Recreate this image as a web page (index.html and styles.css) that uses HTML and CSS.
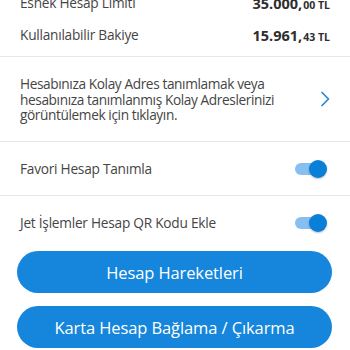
FILE: index.html
```html
<!DOCTYPE html>
<html lang="tr">
<head>
<meta charset="utf-8">
<link rel="stylesheet" href="styles.css">
</head>
<body>
<div class="page">
  <section class="amounts">
    <div class="amount-row">
      <span class="label">Esnek Hesap Limiti</span>
      <span class="value"><span class="main">35.000,</span><span class="small">00 TL</span></span>
    </div>
    <div class="amount-row">
      <span class="label">Kullanılabilir Bakiye</span>
      <span class="value"><span class="main">15.961,</span><span class="small">43 TL</span></span>
    </div>
  </section>
  <section class="link-row">
    <p class="link-text">Hesabınıza Kolay Adres tanımlamak veya hesabınıza tanımlanmış Kolay Adreslerinizi görüntülemek için tıklayın.</p>
    <svg class="chevron" width="10" height="16" viewBox="0 0 10 16"><polyline points="2,1.5 8.5,8 2,14.5" fill="none" stroke="#2a86d0" stroke-width="1.7" stroke-linecap="round" stroke-linejoin="round"/></svg>
  </section>
  <section class="toggle-row bordered">
    <span class="label">Favori Hesap Tanımla</span>
    <span class="switch"><span class="track"></span><span class="thumb"></span></span>
  </section>
  <section class="toggle-row">
    <span class="label">Jet İşlemler Hesap QR Kodu Ekle</span>
    <span class="switch"><span class="track"></span><span class="thumb"></span></span>
  </section>
  <div class="buttons">
    <button class="btn">Hesap Hareketleri</button>
    <button class="btn">Karta Hesap Bağlama / Çıkarma</button>
  </div>
</div>
</body>
</html>
```
FILE: styles.css
```css
html, body {
  margin: 0;
  padding: 0;
  background: #ffffff;
  overflow: hidden;
}
body {
  font-family: "Open Sans", "Noto Sans", sans-serif;
  color: #454545;
}
.page {
  margin-top: -14px;
}
.amounts {
  padding: 0 20px 4px 20px;
  border-bottom: 1px solid #e6e6e6;
}
.amount-row {
  display: flex;
  justify-content: space-between;
  align-items: center;
  height: 33px;
}
.amount-row:last-child {
  padding-bottom: 2px;
  height: 31px;
}
.label {
  font-size: 13.7px;
  letter-spacing: -0.25px;
}
.value {
  color: #2e2e2e;
  font-weight: 700;
}
.value .main {
  font-size: 14.5px;
}
.value .small {
  font-size: 10.5px;
  margin-left: 1px;
}
.link-row {
  display: flex;
  align-items: center;
  justify-content: space-between;
  height: 84px;
  padding: 0 20px;
  border-bottom: 1px solid #e6e6e6;
}
.link-text {
  margin: 1px 0 0 0;
  width: 270px;
  font-size: 13.7px;
  line-height: 15.5px;
  letter-spacing: -0.4px;
}
.toggle-row {
  display: flex;
  align-items: center;
  justify-content: space-between;
  height: 53px;
  padding: 0 23px 0 20px;
}
.toggle-row.bordered {
  border-bottom: 1px solid #e6e6e6;
}
.switch {
  position: relative;
  width: 32px;
  height: 18px;
}
.track {
  position: absolute;
  left: 0;
  top: 3px;
  width: 28px;
  height: 12px;
  border-radius: 6px;
  background: #86bff0;
}
.thumb {
  position: absolute;
  right: 0;
  top: 0;
  width: 18px;
  height: 18px;
  border-radius: 50%;
  background: #0a7fd8;
  box-shadow: 0 1px 2px rgba(0, 0, 0, 0.25);
}
.buttons {
  display: flex;
  flex-direction: column;
  gap: 13px;
  padding: 2px 18px 0 17px;
}
.btn {
  height: 42px;
  border: none;
  border-radius: 21px;
  background: #1586dc;
  color: #ffffff;
  font-family: "Open Sans", "Noto Sans", sans-serif;
  font-size: 16.5px;
  letter-spacing: -0.1px;
  padding: 0;
}
```
